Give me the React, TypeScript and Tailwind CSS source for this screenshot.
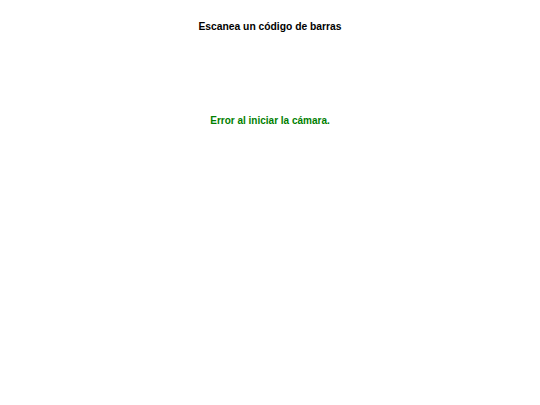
import React from "react";

export default function App() {
  return (
    <div className="min-h-screen bg-white font-['Liberation_Sans',Arial,sans-serif] flex flex-col items-center">
      {/* Title */}
      <p className="mt-[20px] text-[10.3px] leading-[14px] font-bold text-black">Escanea un código de barras</p>

      {/* Camera area */}
      <div className="w-full h-[80px]"></div>

      {/* Status */}
      <p className="text-[10px] leading-[14px] font-bold text-[#008000]">Error al iniciar la cámara.</p>
    </div>
  );
}
